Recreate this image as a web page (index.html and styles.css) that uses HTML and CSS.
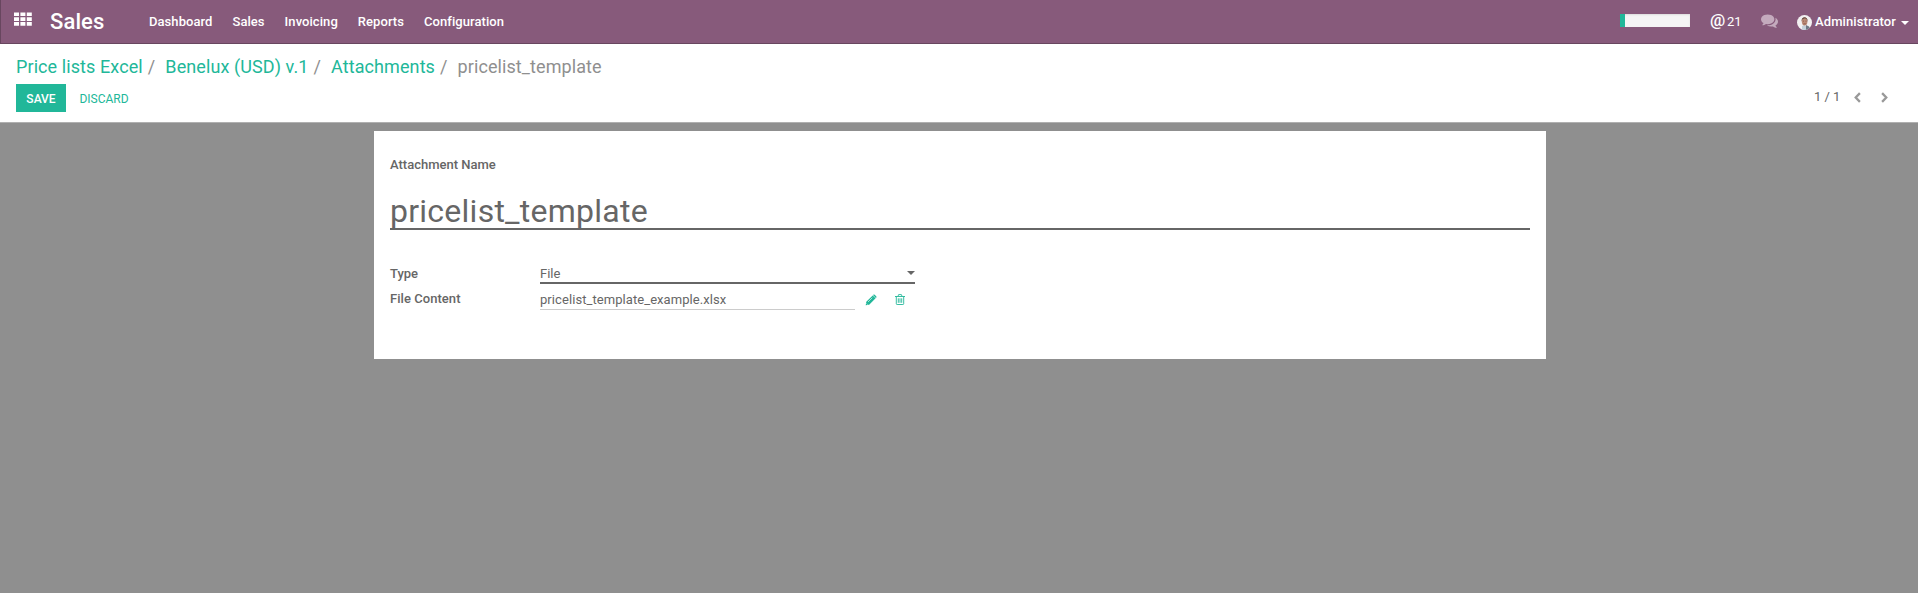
FILE: index.html
```html
<!DOCTYPE html>
<html lang="en">
<head>
<meta charset="utf-8">
<title>pricelist_template - Sales</title>
<link rel="stylesheet" href="styles.css">
</head>
<body>
<header class="navbar">
  <svg class="apps" viewBox="0 0 18 14" width="18" height="14"><path fill="#fff" d="M0 .5h5v3.600H0zM6.400.5h5v3.600h-5zM12.800.5h5v3.600h-5zM0 5.300h5v3.600H0zM6.400 5.300h5v3.600h-5zM12.800 5.300h5v3.600h-5zM0 10.100h5v3.600H0zM6.400 10.100h5v3.600h-5zM12.800 10.100h5v3.600h-5z"/></svg>
  <div class="brand">Sales</div>
  <nav class="menu">
    <a>Dashboard</a><a>Sales</a><a>Invoicing</a><a>Reports</a><a>Configuration</a>
  </nav>
  <div class="systray">
    <div class="progress"><div class="progress-bar"></div></div>
    <div class="mentions"><span class="at">@</span><span class="count">21</span></div>
    <svg class="chat" viewBox="0 0 1792 1792" width="17" height="17"><path fill="#c4aabd" d="M1408 768q0 139-94 257t-256.500 186.500-353.500 68.500q-86 0-176-16-124 88-278 128-36 9-86 16h-3q-11 0-20.500-8t-11.500-21q-1-3-1-6.500t.5-6.500 2-6l2.500-5 3.500-5.500 4-5 4.500-5 4-4.500q5-6 23-25t26-29.500 22.500-29 25-38.500 20.500-44q-124-72-195-177t-71-224q0-139 94-257t256.500-186.500 353.500-68.500 353.500 68.500 256.500 186.500 94 257zm384 256q0 120-71 224.500t-195 176.500q10 24 20.500 44t25 38.500 22.500 29 26 29.500 23 25q1 1 4 4.500t4.500 5 4 5 3.500 5.500l2.500 5 2 6 .5 6.500-1 6.500q-3 14-13 22t-22 7q-50-7-86-16-154-40-278-128-90 16-176 16-271 0-472-132 58 4 88 4 161 0 309-45t264-129q125-92 192-212t67-254q0-77-23-152 129 71 204 178t75 230z"/></svg>
    <svg class="avatar" viewBox="0 0 15 15" width="15" height="15"><defs><clipPath id="face"><circle cx="7.500" cy="7.500" r="7.500"/></clipPath></defs><g clip-path="url(#face)"><path fill="#f2f0f1" d="M0 0h15v15H0z"/><path fill="#6f7884" d="M8 15l1-5 3 1.500 2 3.500z"/><path fill="#c4d0d9" d="M5 15v-4l2.500-1L9 12v3z"/><ellipse cx="7.600" cy="6.500" rx="2.800" ry="4" fill="#b98a75"/><path fill="#63483e" d="M4.600 6.500C3.800 1 11.200.6 10.800 7L10 4.500 8 3.200 5.400 4.200z"/><path fill="#875147" d="M6.400 8.400h2.500v.8H6.400zM6 5.700h1v.7H6zM8.500 5.700h1v.7h-1z"/></g></svg>
    <span class="user">Administrator</span>
    <span class="caret"></span>
  </div>
</header>
<section class="control-panel">
  <div class="breadcrumb">
    <a>Price lists Excel</a><i>/</i><a>Benelux (USD) v.1</a><i>/</i><a>Attachments</a><i>/</i><span>pricelist_template</span>
  </div>
  <div class="actions">
    <button class="save">SAVE</button>
    <button class="discard">DISCARD</button>
    <div class="pager"><span class="count">1 / 1</span>
      <svg class="prev" viewBox="0 0 7 11" width="7" height="11"><path d="M5.900 1.100L1.700 5.500l4.200 4.400" fill="none" stroke="#999" stroke-width="2.300"/></svg>
      <svg class="next" viewBox="0 0 7 11" width="7" height="11"><path d="M1.100 1.100l4.200 4.400-4.200 4.400" fill="none" stroke="#999" stroke-width="2.300"/></svg>
    </div>
  </div>
</section>
<main class="content">
  <div class="sheet">
    <label class="name-label">Attachment Name</label>
    <div class="name-field"><span>pricelist_template</span></div>
    <div class="row type-row"><label>Type</label><div class="select"><span>File</span><b class="caret"></b></div></div>
    <div class="row file-row"><label>File Content</label><div class="file"><span>pricelist_template_example.xlsx</span></div>
      <svg class="pencil" viewBox="0 0 12 12" width="12" height="12"><path fill="#21b799" d="M.7 11.300l.6-3.500L7.700 1.400l2.900 2.900-6.400 6.400zM8.300.8q.7-.7 1.400 0l1.500 1.500q.7.700 0 1.400l-.3.300L8 1.100z"/><path fill="none" stroke="#fff" stroke-width=".6" d="M3 8l4.300-4.300M1.500 9.400l1.300 1.300"/></svg>
      <svg class="trash" viewBox="0 0 10 11" width="10" height="11"><path fill="none" stroke="#21b799" stroke-width=".9" d="M0 2.500h10M3 2.300L3.600.6h2.800L7 2.300M1.300 2.500v7.200q0 .8.800.8h5.800q.8 0 .8-.8V2.500M3.300 4.300v4.500M5 4.300v4.500M6.700 4.300v4.500"/></svg>
    </div>
  </div>
</main>
</body>
</html>
```
FILE: styles.css
```css
* { box-sizing: border-box; }
body { margin: 0; height: 593px; display: flex; flex-direction: column; overflow: hidden; background: #8f8f8f; color: #666; font: 13px/18px Roboto, sans-serif; }
svg { display: block; flex: none; }
.navbar { flex: none; height: 44px; display: flex; align-items: flex-start; background: #875a7b; border-bottom: 1px solid #68465f; border-left: 1px solid #68465f; color: #fff; font-weight: 500; white-space: nowrap; }
.apps { margin: 12px 0 0 13px; }
.brand { width: 99px; margin: 9px 0 0 18px; font-size: 22px; line-height: 25px; letter-spacing: .1px; }
.menu { display: flex; gap: 20px; margin-top: 13px; letter-spacing: .06px; }
.systray { display: flex; margin-left: auto; }
.progress { width: 70px; height: 13px; margin: 14px 20px 0 0; background: #f5f5f5; box-shadow: inset 0 1px 2px rgba(0,0,0,.1); }
.progress-bar { width: 5px; height: 13px; background: #21b799; }
.mentions { display: flex; width: 51px; margin-top: 13px; }
.at { width: 17px; font-size: 17px; line-height: 14px; }
.mentions .count { font-weight: 400; }
.chat { margin: 12px 19px 0 0; }
.avatar { margin: 15px 3px 0 0; }
.user { width: 81px; margin-top: 13px; letter-spacing: .1px; }
.caret { width: 8px; height: 4px; background: currentColor; clip-path: polygon(0 0, 100% 0, 50% 100%); }
.systray .caret { margin: 21px 9px 0 5px; }
.control-panel { flex: none; height: 79px; padding: 10px 16px 0; background: #fff; border-bottom: 1px solid #b0b0b0; }
.breadcrumb { display: flex; height: 30px; font-size: 18px; line-height: 26px; letter-spacing: .09px; color: #8f8f8f; white-space: nowrap; }
.breadcrumb a { color: #21b799; }
.breadcrumb i { font-style: normal; padding: 0 10px 0 5px; }
.actions { display: flex; height: 28px; }
button { border: 0; font: 12px/28px Roboto, sans-serif; padding: 1px 0 0; height: 28px; text-align: center; }
.save { width: 50px; background: #21b799; color: #fff; font-weight: 500; }
.discard { width: 50px; margin-left: 13px; background: none; color: #21b799; }
.pager { display: flex; margin-left: auto; }
.pager .count { width: 40px; margin-top: 4px; }
.prev { margin: 8px 20px 0 0; }
.next { margin: 8px 14px 0 0; }
.content { flex: 1; padding: 8px 372px 0 374px; }
.sheet { height: 228px; background: #fff; padding: 25px 16px 0; }
label { font-weight: 500; }
.name-label { display: block; height: 18px; }
.name-field { height: 56px; padding-top: 17px; border-bottom: 2px solid #666; font-size: 32px; line-height: 40px; letter-spacing: .25px; }
.row { display: flex; }
.row label { width: 150px; }
.type-row { height: 25px; margin-top: 29px; }
.type-row label { padding-top: 6px; }
.select { display: flex; justify-content: space-between; width: 375px; border-bottom: 2px solid #666; padding-top: 6px; }
.select .caret { margin: 6px 0 0; }
.file-row { height: 26px; }
.file-row label { padding-top: 6px; letter-spacing: .05px; }
.file { width: 315px; padding-top: 7px; border-bottom: 1px solid #ccc; letter-spacing: .07px; }
.pencil { margin: 10px 0 0 10px; }
.trash { margin: 10px 0 0 18px; }
```
